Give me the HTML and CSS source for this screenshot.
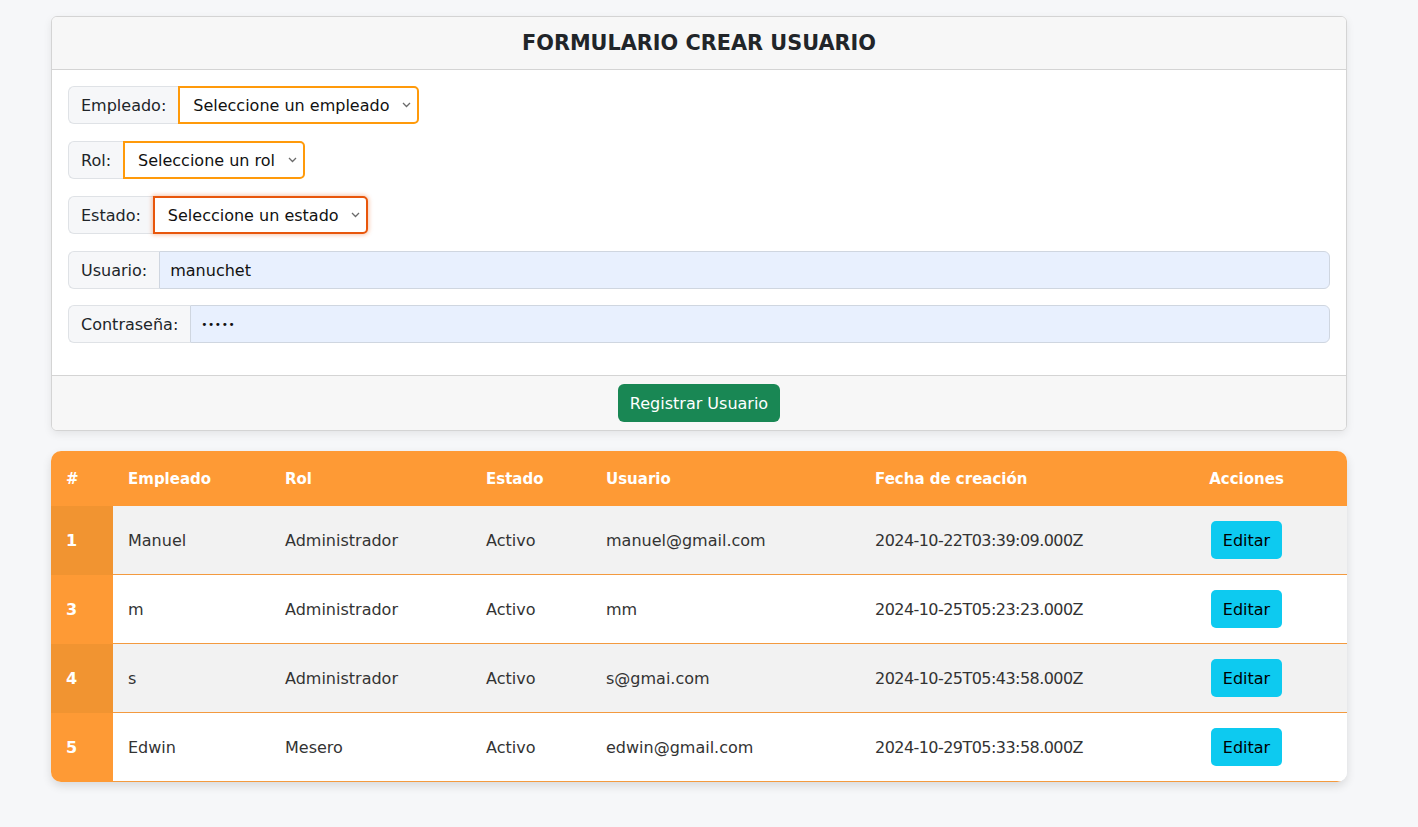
FILE: index.html
```html
<!DOCTYPE html>
<html lang="es">
<head>
<meta charset="utf-8">
<title>Usuarios</title>
<link rel="stylesheet" href="styles.css">
</head>
<body>
<main class="page">
  <section class="card">
    <header class="card-header"><h1>FORMULARIO CREAR USUARIO</h1></header>
    <div class="card-body">
      <div class="input-group">
        <span class="label">Empleado:</span>
        <div class="select-wrap">
          <select class="sel"><option>Seleccione un empleado</option></select>
          <svg class="chev" width="9" height="6" viewBox="0 0 9 6"><path d="M1 1 L4.5 4.5 L8 1" fill="none" stroke="#6b6b6b" stroke-width="1.3"/></svg>
        </div>
      </div>
      <div class="input-group">
        <span class="label">Rol:</span>
        <div class="select-wrap">
          <select class="sel"><option>Seleccione un rol</option></select>
          <svg class="chev" width="9" height="6" viewBox="0 0 9 6"><path d="M1 1 L4.5 4.5 L8 1" fill="none" stroke="#6b6b6b" stroke-width="1.3"/></svg>
        </div>
      </div>
      <div class="input-group">
        <span class="label">Estado:</span>
        <div class="select-wrap">
          <select class="sel sel-focus"><option>Seleccione un estado</option></select>
          <svg class="chev" width="9" height="6" viewBox="0 0 9 6"><path d="M1 1 L4.5 4.5 L8 1" fill="none" stroke="#6b6b6b" stroke-width="1.3"/></svg>
        </div>
      </div>
      <div class="input-group full">
        <span class="label">Usuario:</span>
        <input class="inp" type="text" value="manuchet">
      </div>
      <div class="input-group full">
        <span class="label">Contraseña:</span>
        <input class="inp pwd" type="password" value="12345">
      </div>
    </div>
    <footer class="card-footer"><button class="btn-success">Registrar Usuario</button></footer>
  </section>

  <table class="users">
    <colgroup>
      <col class="c-num"><col class="c-emp"><col class="c-rol"><col class="c-est"><col class="c-usr"><col class="c-fec"><col class="c-acc">
    </colgroup>
    <thead>
      <tr><th>#</th><th>Empleado</th><th>Rol</th><th>Estado</th><th>Usuario</th><th>Fecha de creación</th><th class="center">Acciones</th></tr>
    </thead>
    <tbody>
      <tr><td class="num">1</td><td>Manuel</td><td>Administrador</td><td>Activo</td><td>manuel@gmail.com</td><td class="date">2024-10-22T03:39:09.000Z</td><td class="center"><button class="btn-info">Editar</button></td></tr>
      <tr><td class="num">3</td><td>m</td><td>Administrador</td><td>Activo</td><td>mm</td><td class="date">2024-10-25T05:23:23.000Z</td><td class="center"><button class="btn-info">Editar</button></td></tr>
      <tr><td class="num">4</td><td>s</td><td>Administrador</td><td>Activo</td><td>s@gmai.com</td><td class="date">2024-10-25T05:43:58.000Z</td><td class="center"><button class="btn-info">Editar</button></td></tr>
      <tr><td class="num">5</td><td>Edwin</td><td>Mesero</td><td>Activo</td><td>edwin@gmail.com</td><td class="date">2024-10-29T05:33:58.000Z</td><td class="center"><button class="btn-info">Editar</button></td></tr>
    </tbody>
  </table>
</main>
</body>
</html>
```
FILE: styles.css
```css
* { box-sizing: border-box; }
html, body { margin: 0; padding: 0; }
body {
  background: #f6f7f9;
  font-family: "DejaVu Sans", "Open Sans", sans-serif;
  color: #212529;
  font-size: 16px;
}
.page {
  padding: 16px 0 40px 51px;
  width: 1347px;
}
.card {
  background: #fff;
  border: 1px solid #d4d4d4;
  border-radius: 6px;
  box-shadow: 0 3px 8px rgba(0,0,0,0.08);
  overflow: hidden;
}
.card-header {
  background: #f7f7f7;
  border-bottom: 1px solid #d4d4d4;
  height: 53px;
  display: flex;
  align-items: center;
  justify-content: center;
}
.card-header h1 {
  margin: 0;
  font-size: 20.8px;
  font-weight: 700;
  color: #212529;
}
.card-body {
  padding: 16px 16px 16px;
}
.input-group {
  display: flex;
  width: max-content;
  align-items: stretch;
  height: 38px;
  margin-bottom: 17px;
}
.input-group.full { width: auto; margin-bottom: 16px; }
.label {
  display: flex;
  align-items: center;
  padding: 0 12px;
  background: #f6f7f9;
  border: 1px solid #dfe2e6;
  border-right: none;
  border-radius: 6px 0 0 6px;
  font-size: 16px;
  color: #212529;
}
.select-wrap {
  position: relative;
  display: flex;
}
.sel {
  appearance: none;
  -webkit-appearance: none;
  font-family: inherit;
  font-size: 16px;
  color: #111;
  background: #fff;
  border: 2px solid #ff9a0a;
  border-radius: 0 5px 5px 0;
  padding: 0 27px 0 13px;
  height: 38px;
  outline: none;
}
.chev {
  position: absolute;
  right: 8px;
  top: 16px;
}
.sel-focus {
  border-color: #e8560b;
  box-shadow: 0 0 4px 1px rgba(232, 86, 11, 0.35);
}
.inp {
  flex: 1;
  font-family: inherit;
  font-size: 16px;
  color: #111;
  background: #e8f0fe;
  border: 1px solid #cfd6e0;
  border-radius: 0 6px 6px 0;
  padding: 0 10px;
  outline: none;
}
.pwd { font-size: 10.5px; letter-spacing: 0.6px; }
.card-footer {
  background: #f7f7f7;
  border-top: 1px solid #d4d4d4;
  padding: 8px 16px;
  display: flex;
  justify-content: center;
}
.btn-success {
  background: #198754;
  color: #fff;
  border: none;
  border-radius: 6px;
  height: 38px;
  padding: 0 12px;
  font-family: inherit;
  font-size: 16px;
}
.users {
  margin-top: 20px;
  width: 1296px;
  border-collapse: separate;
  border-spacing: 0;
  table-layout: fixed;
  border-radius: 10px;
  overflow: hidden;
  box-shadow: 0 4px 10px rgba(0,0,0,0.12);
  background: #fff;
}
.c-num { width: 62px; }
.c-emp { width: 157px; }
.c-rol { width: 201px; }
.c-est { width: 120px; }
.c-usr { width: 269px; }
.c-fec { width: 286px; }
.c-acc { width: 201px; }
.users th {
  background: #fe9a35;
  color: #fff;
  font-weight: 700;
  font-size: 15px;
  text-align: left;
  height: 55px;
  padding: 0 15px;
}
.users td {
  height: 69px;
  padding: 0 15px;
  font-size: 16px;
  color: #333;
  border-bottom: 1px solid #f39a3f;
}
.users td.date { letter-spacing: -0.55px; }
.users tbody tr:nth-child(odd) td { background: #f2f2f2; }
.users tbody tr:nth-child(even) td { background: #fff; }
.users td.num {
  color: #fff;
  font-weight: 700;
  border-bottom: none;
}
.users tbody tr:nth-child(odd) td.num { background: #f19431; }
.users tbody tr:nth-child(even) td.num { background: #fe9a35; }
.users .center { text-align: center; }
.btn-info {
  background: #0dcaf0;
  color: #000;
  border: none;
  border-radius: 5px;
  height: 38px;
  padding: 0 12px;
  font-family: inherit;
  font-size: 16px;
}
```
